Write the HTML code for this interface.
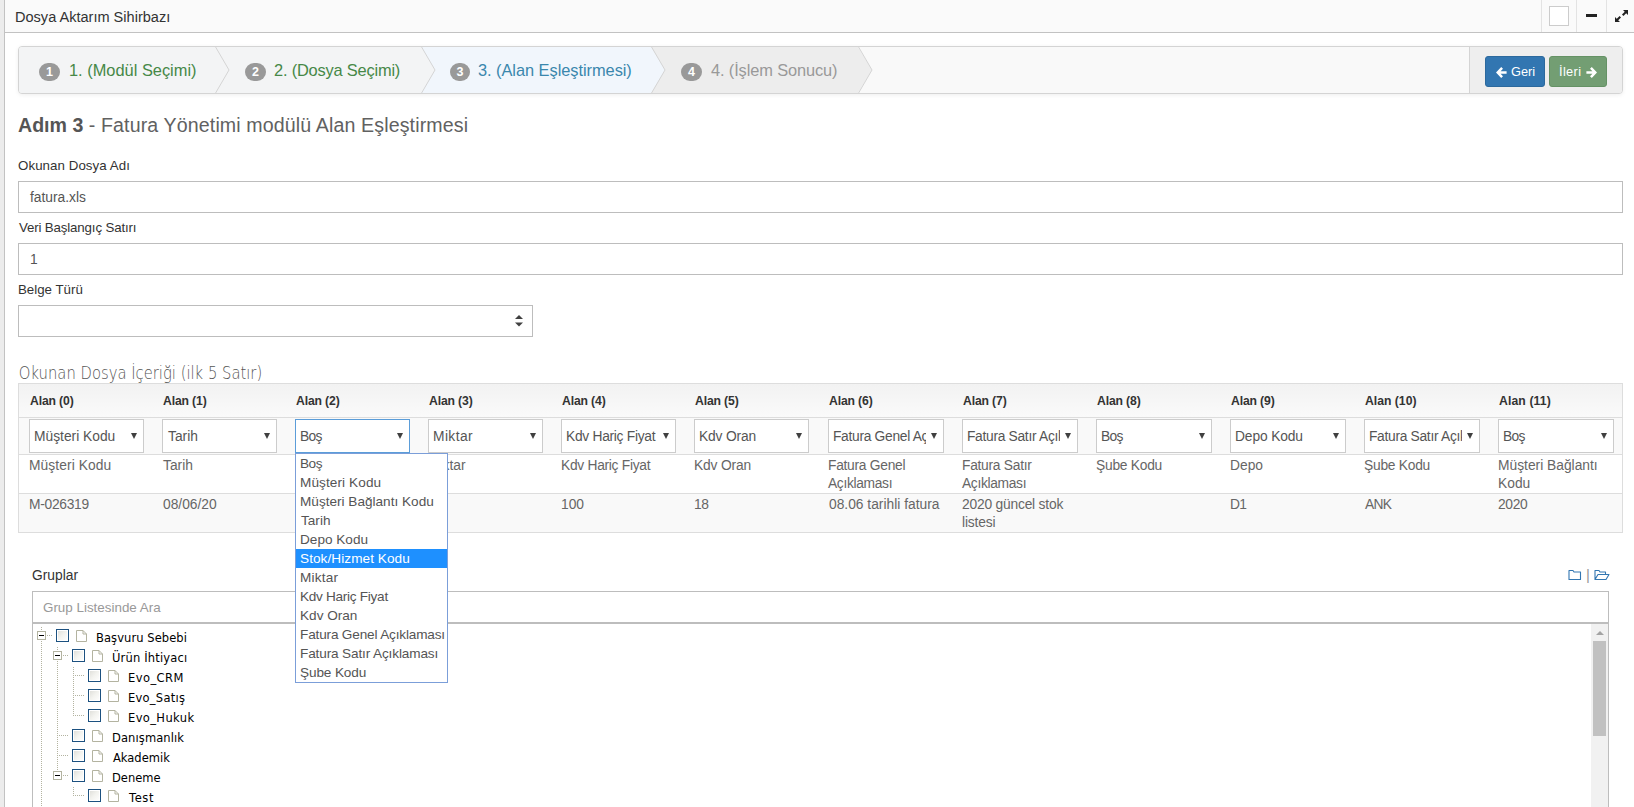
<!DOCTYPE html>
<html lang="tr"><head><meta charset="utf-8"><title>Dosya Aktarım Sihirbazı</title>
<style>
*{box-sizing:border-box}
html,body{margin:0;padding:0}
body{width:1634px;height:807px;overflow:hidden;background:#fff;position:relative;font-family:"Liberation Sans",sans-serif;font-size:13.8px;color:#333;line-height:18px}
i{display:block;position:absolute;font-style:normal}
.abs{position:absolute;white-space:nowrap}
.lstrip{position:absolute;left:0;top:0;width:5px;height:807px;background:#ececec;border-right:1px solid #c2c2c2}
.hdr{position:absolute;left:5px;top:0;width:1629px;height:33px;background:#fafafa;border-bottom:1px solid #c2c2c2}
.hdr h2{position:absolute;left:10px;top:1px;margin:0;font-weight:normal;font-size:14.55px;line-height:33px;color:#333;white-space:nowrap}
.hdr .sep{position:absolute;top:0;width:1px;height:32px;background:#e3e3e3}
.hdr .cbox{position:absolute;left:1544px;top:6px;width:20px;height:20px;background:#fff;border:1px solid #ccc}
.hdr .minus{position:absolute;left:1581px;top:14px;width:11px;height:3px;background:#222}
.hdr svg{position:absolute;left:1610px;top:10px}
.wiz{position:absolute;left:18px;top:46px;width:1605px;height:48px;border:1px solid #d4d4d4;border-radius:4px;background:#f9f9f9;box-shadow:0 1px 4px rgba(0,0,0,.065);overflow:hidden}
.wiz .li{position:absolute;top:0;height:46px;line-height:46px;font-size:16.4px;white-space:nowrap}
.wiz .li .bd.b3{width:20px}
.wiz .li .bd{position:absolute;top:16px;width:21px;height:18px;border-radius:9px;background:#999;color:#fff;font-weight:bold;font-size:12.5px;line-height:18px;text-align:center}
.wiz .li .tx{position:absolute;top:0}
.wiz .li.done{background:#f3f4f5;color:#468847}
.wiz .li.act{background:#f1f6fc;color:#3a87ad}
.wiz .li.todo{background:#ededed;color:#999}
.wiz svg.chev{position:absolute;top:0}
.wiz .acts{position:absolute;left:1450px;top:0;width:153px;height:46px;background:#eee;border-left:1px solid #d4d4d4}
.btn{position:absolute;top:9px;height:31px;border-radius:3px;color:#fff;font-size:12.8px;line-height:29px;border:1px solid;white-space:nowrap}
.btn.geri{left:15px;width:60px;background:#3276b1;border-color:#2c699d}
.btn.ileri{left:79px;width:58px;background:#739e73;border-color:#659265}
.btn span{position:absolute;top:0}
.btn svg{position:absolute;top:10px}
h3.pt{position:absolute;left:18px;top:112px;margin:0;font-size:19.6px;line-height:26px;font-weight:normal;color:#616161;white-space:nowrap}
h3.pt b{color:#555}
.lbl{position:absolute;left:18px;color:#333;white-space:nowrap;line-height:18px;font-size:13.3px}
.inp{position:absolute;left:18px;width:1605px;height:32px;border:1px solid #bdbdbd;background:#fff;color:#555;padding:0 10px;line-height:32px;white-space:nowrap}
h4.sec{position:absolute;left:18px;top:362px;margin:0;font-family:"DejaVu Sans","Liberation Sans",sans-serif;font-size:17px;line-height:22px;font-weight:200;color:#555;white-space:nowrap;transform:scaleX(.87);transform-origin:0 50%}
.tbl{position:absolute;left:18px;top:383px;width:1605px;height:150px;border:1px solid #ddd;color:#666}
.tbl>div{position:absolute}
.thead{left:0;top:0;width:1603px;height:33px;background:linear-gradient(#f2f2f2,#fafafa)}
.r2{left:0;top:33px;width:1603px;height:37px;background:#f9f9f9;border-top:1px solid #ddd}
.r3{left:0;top:70px;width:1603px;height:39px;background:#fff;border-top:1px solid #ddd}
.r4{left:0;top:109px;width:1603px;height:39px;background:#f9f9f9;border-top:1px solid #ddd}
.th{top:8px;font-weight:bold;font-size:12.2px;line-height:18px;color:#333;white-space:nowrap}
.sel{top:35px;width:115px;height:34px;border:1px solid #ccc;background:#fff;color:#555}
.sel.foc{border-color:#5b9dd9}
.sel .st{position:absolute;left:4px;top:0;width:93px;overflow:hidden;white-space:nowrap;line-height:33px}
.sel .ar{right:6px;top:13px;width:0;height:0;border-left:3.5px solid transparent;border-right:3.5px solid transparent;border-top:6px solid #404040}
.td{line-height:18px;white-space:nowrap}
.td.c1{top:73px}
.td.c2{top:112px}
.dd{position:absolute;left:295px;top:453px;width:153px;height:230px;border:1px solid #7b9ed9;background:#fff;color:#555;font-size:13.6px;line-height:19px;white-space:nowrap;overflow:hidden}
.dd div{height:19px;padding-left:4px}
.dd .hl{background:#1e90ff;color:#fff}
.glbl{position:absolute;left:32px;top:567px;line-height:18px;color:#333}
.gic{position:absolute;top:569px}
.gbar{position:absolute;left:1586px;top:566px;color:#999;font-size:15px;line-height:18px}
.ginp{position:absolute;left:32px;top:591px;width:1577px;height:33px;border:1px solid #bdbdbd;border-bottom:2px solid #bdbdbd;background:#fff;color:#999;padding:0 10px;line-height:32px;font-size:13.4px}
.gbox{position:absolute;left:32px;top:624px;width:1577px;height:200px;border-left:1px solid #bdbdbd;border-right:1px solid #bdbdbd}
.tree{position:absolute;left:32px;top:626px;width:600px;height:181px;font-family:"DejaVu Sans","Liberation Sans",sans-serif;font-size:11.5px;color:#000}
.tree .tr{position:absolute;height:20px;width:300px}
.tree .ex{left:5px;top:5px;width:9px;height:9px;border:1px solid #b3b3a0;background:#fff}
.tree .ex:before{content:"";position:absolute;left:1px;top:3px;width:5px;height:1px;background:#000}
.tree .ex:after{content:"";position:absolute;left:9px;top:3px;width:6px;height:1px;background:repeating-linear-gradient(90deg,#b3b3a0 0 1px,transparent 1px 2px)}
.tree .hd{left:9px;top:9px;width:12px;height:1px;background:repeating-linear-gradient(90deg,#b3b3a0 0 1px,transparent 1px 2px)}
.tree .cb{left:24px;top:3px;width:13px;height:13px;border:1px solid #1c5180;background:linear-gradient(135deg,#dcdcd7 0%,#f3f3ef 50%,#fff 100%);box-shadow:inset 0 0 0 1px #fff}
.tree .fi{position:absolute;left:44px;top:4px}
.tree .tt{position:absolute;left:64px;top:2px;line-height:20px;white-space:nowrap}
.tree .vd{width:1px;background:repeating-linear-gradient(180deg,#b3b3a0 0 1px,transparent 1px 2px)}
.sb{position:absolute;left:1591px;top:624px;width:17px;height:183px;background:#f1f1f1}
.sb .up{left:5px;top:7px;width:0;height:0;border-left:4px solid transparent;border-right:4px solid transparent;border-bottom:4px solid #a3a3a3}
.sb .thumb{left:2px;top:17px;width:13px;height:95px;background:#c1c1c1}

.t{position:relative;display:inline-block;white-space:nowrap}

</style></head><body>
<div class="lstrip"></div>
<div class="hdr"><h2><span id="ttl" class="t">Dosya Aktarım Sihirbazı</span></h2>
<span class="sep" style="left:1536px"></span><span class="sep" style="left:1571px"></span><span class="sep" style="left:1601px"></span>
<span class="cbox"></span><span class="minus"></span>
<svg width="13" height="12" viewBox="0 0 13 12"><path d="M8 0H13V5Z M0 7V12H5Z" fill="#222"/><path d="M11 2L7.7 5.3 M2 10L5.3 6.7" stroke="#222" stroke-width="2" fill="none"/></svg>
</div>
<div class="wiz">
<div class="li done" style="left:0;width:196px"><span class="bd" style="left:20px">1</span><span class="tx" style="left:50px"><span id="s1" class="t">1. (Modül Seçimi)</span></span></div>
<div class="li done" style="left:196px;width:206px"><span class="bd" style="left:30px">2</span><span class="tx" style="left:60px"><span id="s2" class="t" style="left:-1.00px;letter-spacing:-0.188px">2. (Dosya Seçimi)</span></span></div>
<div class="li act" style="left:402px;width:230px"><span class="bd b3" style="left:29px">3</span><span class="tx" style="left:58px"><span id="s3" class="t" style="left:-1.00px;letter-spacing:-0.048px">3. (Alan Eşleştirmesi)</span></span></div>
<div class="li todo" style="left:632px;width:207px"><span class="bd" style="left:30px">4</span><span class="tx" style="left:60px"><span id="s4" class="t" style="letter-spacing:-0.125px">4. (İşlem Sonucu)</span></span></div>
<svg class="chev" style="left:196px" width="15" height="46"><polygon points="0,0 14,23 0,46" fill="#f3f4f5"/><polyline points="0,-1 14,23 0,47" fill="none" stroke="#d4d4d4"/></svg>
<svg class="chev" style="left:402px" width="15" height="46"><polygon points="0,0 14,23 0,46" fill="#f3f4f5"/><polyline points="0,-1 14,23 0,47" fill="none" stroke="#d4d4d4"/></svg>
<svg class="chev" style="left:632px" width="15" height="46"><polygon points="0,0 14,23 0,46" fill="#f1f6fc"/><polyline points="0,-1 14,23 0,47" fill="none" stroke="#d4d4d4"/></svg>
<svg class="chev" style="left:839px" width="15" height="46"><polygon points="0,0 14,23 0,46" fill="#ededed"/><polyline points="0,-1 14,23 0,47" fill="none" stroke="#d4d4d4"/></svg>
<div class="acts">
<div class="btn geri"><svg style="left:10px" width="11" height="11" viewBox="0 0 11 11"><path d="M5.2 0L7 1.8L4.6 4.2H10.6V6.8H4.6L7 9.2L5.2 11L0 5.5Z" fill="#fff"/></svg><span style="left:26px"><span id="geri" class="t" style="left:-1.00px">Geri</span></span></div>
<div class="btn ileri"><span style="left:10px"><span id="ileri" class="t" style="left:-1.00px;letter-spacing:0.350px">İleri</span></span><svg style="left:36px" width="11" height="11" viewBox="0 0 11 11"><path d="M5.8 0L4 1.8L6.4 4.2H0.4V6.8H6.4L4 9.2L5.8 11L11 5.5Z" fill="#fff"/></svg></div>
</div>
</div>
<h3 class="pt"><b><span id="ptb" class="t">Adım 3</span></b> <span id="ptr" class="t" style="letter-spacing:0.122px">- Fatura Yönetimi modülü Alan Eşleştirmesi</span></h3>
<div class="lbl" style="top:157px"><span id="l1" class="t" style="letter-spacing:0.067px">Okunan Dosya Adı</span></div>
<div class="inp" style="top:181px"><span id="f1" class="t" style="left:1.00px">fatura.xls</span></div>
<div class="lbl" style="top:219px"><span id="l2" class="t" style="left:1.00px;letter-spacing:-0.150px">Veri Başlangıç Satırı</span></div>
<div class="inp" style="top:243px"><span id="f2" class="t" style="left:1.00px">1</span></div>
<div class="lbl" style="top:281px"><span id="l3" class="t">Belge Türü</span></div>
<div class="inp" style="top:305px;width:515px"><svg style="position:absolute;left:496px;top:9px" width="8" height="12" viewBox="0 0 8 12"><path d="M0 4L4 0L8 4Z M0 7.5H8L4 11.5Z" fill="#404040"/></svg></div>
<h4 class="sec"><span id="h4" class="t" style="left:1.00px">Okunan Dosya İçeriği (ilk 5 Satır)</span></h4>
<div class="tbl">
<div class="thead"></div><div class="r2"></div><div class="r3"></div><div class="r4"></div>
<div class="th" style="left:10px"><span id="th0" class="t" style="left:1.00px;letter-spacing:-0.143px">Alan (0)</span></div><div class="sel" style="left:10px;width:115px"><span class="st"><span id="st0" class="t">Müşteri Kodu</span></span><i class="ar"></i></div><div class="td c1" style="left:10px"><span id="c1_0_0" class="t" style="letter-spacing:0.091px">Müşteri Kodu</span></div><div class="td c2" style="left:10px"><span id="c2_0_0" class="t" style="letter-spacing:-0.286px">M-026319</span></div>
<div class="th" style="left:143px"><span id="th1" class="t" style="left:1.00px;letter-spacing:-0.143px">Alan (1)</span></div><div class="sel" style="left:143px;width:115px"><span class="st"><span id="st1" class="t" style="left:1.00px">Tarih</span></span><i class="ar"></i></div><div class="td c1" style="left:143px"><span id="c1_1_0" class="t" style="left:1.00px">Tarih</span></div><div class="td c2" style="left:143px"><span id="c2_1_0" class="t" style="left:1.00px">08/06/20</span></div>
<div class="th" style="left:276px"><span id="th2" class="t" style="left:1.00px;letter-spacing:-0.143px">Alan (2)</span></div><div class="sel foc" style="left:276px;width:115px"><span class="st"><span id="st2" class="t" style="letter-spacing:-0.700px">Boş</span></span><i class="ar"></i></div>
<div class="th" style="left:409px"><span id="th3" class="t" style="left:1.00px;letter-spacing:-0.143px">Alan (3)</span></div><div class="sel" style="left:409px;width:115px"><span class="st"><span id="st3" class="t" style="letter-spacing:0.400px">Miktar</span></span><i class="ar"></i></div><div class="td c1" style="left:409px"><span id="c1_3_0" class="t">Miktar</span></div>
<div class="th" style="left:542px"><span id="th4" class="t" style="left:1.00px;letter-spacing:-0.143px">Alan (4)</span></div><div class="sel" style="left:542px;width:115px"><span class="st"><span id="st4" class="t" style="letter-spacing:-0.285px">Kdv Hariç Fiyat</span></span><i class="ar"></i></div><div class="td c1" style="left:542px"><span id="c1_4_0" class="t" style="letter-spacing:-0.286px">Kdv Hariç Fiyat</span></div><div class="td c2" style="left:542px"><span id="c2_4_0" class="t">100</span></div>
<div class="th" style="left:675px"><span id="th5" class="t" style="left:1.00px;letter-spacing:-0.143px">Alan (5)</span></div><div class="sel" style="left:675px;width:115px"><span class="st"><span id="st5" class="t" style="letter-spacing:-0.143px">Kdv Oran</span></span><i class="ar"></i></div><div class="td c1" style="left:675px"><span id="c1_5_0" class="t" style="letter-spacing:-0.143px">Kdv Oran</span></div><div class="td c2" style="left:675px"><span id="c2_5_0" class="t" style="letter-spacing:-0.400px">18</span></div>
<div class="th" style="left:809px"><span id="th6" class="t" style="left:1.00px;letter-spacing:-0.143px">Alan (6)</span></div><div class="sel" style="left:809px;width:116px"><span class="st"><span id="st6" class="t" style="letter-spacing:-0.303px">Fatura Genel Açıklaması</span></span><i class="ar"></i></div><div class="td c1" style="left:809px"><span id="c1_6_0" class="t" style="letter-spacing:-0.273px">Fatura Genel</span><br><span id="c1_6_1" class="t" style="letter-spacing:-0.333px">Açıklaması</span></div><div class="td c2" style="left:809px"><span id="c2_6_0" class="t" style="left:1.00px">08.06 tarihli fatura</span></div>
<div class="th" style="left:943px"><span id="th7" class="t" style="left:1.00px;letter-spacing:-0.143px">Alan (7)</span></div><div class="sel" style="left:943px;width:116px"><span class="st"><span id="st7" class="t" style="letter-spacing:-0.303px">Fatura Satır Açıklaması</span></span><i class="ar"></i></div><div class="td c1" style="left:943px"><span id="c1_7_0" class="t" style="letter-spacing:-0.273px">Fatura Satır</span><br><span id="c1_7_1" class="t" style="letter-spacing:-0.333px">Açıklaması</span></div><div class="td c2" style="left:943px"><span id="c2_7_0" class="t" style="letter-spacing:-0.200px">2020 güncel stok</span><br><span id="c2_7_1" class="t" style="letter-spacing:-0.166px">listesi</span></div>
<div class="th" style="left:1077px"><span id="th8" class="t" style="left:1.00px;letter-spacing:-0.143px">Alan (8)</span></div><div class="sel" style="left:1077px;width:116px"><span class="st"><span id="st8" class="t" style="letter-spacing:-0.700px">Boş</span></span><i class="ar"></i></div><div class="td c1" style="left:1077px"><span id="c1_8_0" class="t" style="letter-spacing:-0.250px">Şube Kodu</span></div>
<div class="th" style="left:1211px"><span id="th9" class="t" style="left:1.00px;letter-spacing:-0.143px">Alan (9)</span></div><div class="sel" style="left:1211px;width:116px"><span class="st"><span id="st9" class="t" style="letter-spacing:-0.125px">Depo Kodu</span></span><i class="ar"></i></div><div class="td c1" style="left:1211px"><span id="c1_9_0" class="t">Depo</span></div><div class="td c2" style="left:1211px"><span id="c2_9_0" class="t" style="letter-spacing:-0.700px">D1</span></div>
<div class="th" style="left:1345px"><span id="th10" class="t" style="left:1.00px">Alan (10)</span></div><div class="sel" style="left:1345px;width:116px"><span class="st"><span id="st10" class="t" style="letter-spacing:-0.303px">Fatura Satır Açıklaması</span></span><i class="ar"></i></div><div class="td c1" style="left:1345px"><span id="c1_10_0" class="t" style="letter-spacing:-0.250px">Şube Kodu</span></div><div class="td c2" style="left:1345px"><span id="c2_10_0" class="t" style="left:1.00px;letter-spacing:-0.700px">ANK</span></div>
<div class="th" style="left:1479px"><span id="th11" class="t" style="left:1.00px;letter-spacing:0.125px">Alan (11)</span></div><div class="sel" style="left:1479px;width:116px"><span class="st"><span id="st11" class="t" style="letter-spacing:-0.700px">Boş</span></span><i class="ar"></i></div><div class="td c1" style="left:1479px"><span id="c1_11_0" class="t">Müşteri Bağlantı</span><br><span id="c1_11_1" class="t">Kodu</span></div><div class="td c2" style="left:1479px"><span id="c2_11_0" class="t" style="letter-spacing:-0.334px">2020</span></div>
</div>
<div class="glbl"><span id="gl" class="t">Gruplar</span></div>
<svg class="gic" style="left:1568px" width="14" height="12" viewBox="0 0 14 12"><path d="M1 1.5H5L6 3H12.5V10.5H1Z" fill="none" stroke="#3276b1" stroke-width="1.1" stroke-linejoin="round"/></svg>
<div class="gbar">|</div>
<svg class="gic" style="left:1594px" width="16" height="12" viewBox="0 0 16 12"><path d="M1 10.5V1.5H5L6 3H11.5V5.5 M1 10.5L4 5.5H15L12 10.5Z" fill="none" stroke="#3276b1" stroke-width="1.1" stroke-linejoin="round"/></svg>
<div class="ginp"><span id="ph" class="t">Grup Listesinde Ara</span></div>
<div class="gbox"></div>
<div class="tree">
<i class="vd" style="left:9px;top:1px;height:5px"></i><i class="vd" style="left:9px;top:15px;height:170px"></i>
<i class="vd" style="left:25px;top:21px;height:5px"></i><i class="vd" style="left:25px;top:35px;height:110px"></i>
<i class="vd" style="left:41px;top:41px;height:49px"></i><i class="vd" style="left:41px;top:161px;height:9px"></i>
<div class="tr" style="top:0px;left:0px"><i class="ex"></i><i class="cb"></i><svg class="fi" width="11" height="12" viewBox="0 0 11 12"><path d="M0.5 0.5H7L10.5 4V11.5H0.5Z M7 0.5V4H10.5" fill="#fff" stroke="#b3b3a0" stroke-width="1"/></svg><span class="tt"><span id="tr0" class="t" style="letter-spacing:0.077px">Başvuru Sebebi</span></span></div>
<div class="tr" style="top:20px;left:16px"><i class="ex"></i><i class="cb"></i><svg class="fi" width="11" height="12" viewBox="0 0 11 12"><path d="M0.5 0.5H7L10.5 4V11.5H0.5Z M7 0.5V4H10.5" fill="#fff" stroke="#b3b3a0" stroke-width="1"/></svg><span class="tt"><span id="tr1" class="t" style="letter-spacing:0.166px">Ürün İhtiyacı</span></span></div>
<div class="tr" style="top:40px;left:32px"><i class="hd"></i><i class="cb"></i><svg class="fi" width="11" height="12" viewBox="0 0 11 12"><path d="M0.5 0.5H7L10.5 4V11.5H0.5Z M7 0.5V4H10.5" fill="#fff" stroke="#b3b3a0" stroke-width="1"/></svg><span class="tt"><span id="tr2" class="t" style="letter-spacing:0.433px">Evo_CRM</span></span></div>
<div class="tr" style="top:60px;left:32px"><i class="hd"></i><i class="cb"></i><svg class="fi" width="11" height="12" viewBox="0 0 11 12"><path d="M0.5 0.5H7L10.5 4V11.5H0.5Z M7 0.5V4H10.5" fill="#fff" stroke="#b3b3a0" stroke-width="1"/></svg><span class="tt"><span id="tr3" class="t" style="letter-spacing:0.250px">Evo_Satış</span></span></div>
<div class="tr" style="top:80px;left:32px"><i class="hd"></i><i class="cb"></i><svg class="fi" width="11" height="12" viewBox="0 0 11 12"><path d="M0.5 0.5H7L10.5 4V11.5H0.5Z M7 0.5V4H10.5" fill="#fff" stroke="#b3b3a0" stroke-width="1"/></svg><span class="tt"><span id="tr4" class="t" style="letter-spacing:0.375px">Evo_Hukuk</span></span></div>
<div class="tr" style="top:100px;left:16px"><i class="hd"></i><i class="cb"></i><svg class="fi" width="11" height="12" viewBox="0 0 11 12"><path d="M0.5 0.5H7L10.5 4V11.5H0.5Z M7 0.5V4H10.5" fill="#fff" stroke="#b3b3a0" stroke-width="1"/></svg><span class="tt"><span id="tr5" class="t" style="letter-spacing:0.100px">Danışmanlık</span></span></div>
<div class="tr" style="top:120px;left:16px"><i class="hd"></i><i class="cb"></i><svg class="fi" width="11" height="12" viewBox="0 0 11 12"><path d="M0.5 0.5H7L10.5 4V11.5H0.5Z M7 0.5V4H10.5" fill="#fff" stroke="#b3b3a0" stroke-width="1"/></svg><span class="tt"><span id="tr6" class="t" style="left:1.00px">Akademik</span></span></div>
<div class="tr" style="top:140px;left:16px"><i class="ex"></i><i class="cb"></i><svg class="fi" width="11" height="12" viewBox="0 0 11 12"><path d="M0.5 0.5H7L10.5 4V11.5H0.5Z M7 0.5V4H10.5" fill="#fff" stroke="#b3b3a0" stroke-width="1"/></svg><span class="tt"><span id="tr7" class="t">Deneme</span></span></div>
<div class="tr" style="top:160px;left:32px"><i class="hd"></i><i class="cb"></i><svg class="fi" width="11" height="12" viewBox="0 0 11 12"><path d="M0.5 0.5H7L10.5 4V11.5H0.5Z M7 0.5V4H10.5" fill="#fff" stroke="#b3b3a0" stroke-width="1"/></svg><span class="tt"><span id="tr8" class="t" style="left:1.00px;letter-spacing:0.600px">Test</span></span></div>
</div>
<div class="sb"><i class="up"></i><i class="thumb"></i></div>
<div class="dd"><div><span id="dd0" class="t" style="letter-spacing:-0.500px">Boş</span></div><div><span id="dd1" class="t" style="letter-spacing:0.091px">Müşteri Kodu</span></div><div><span id="dd2" class="t">Müşteri Bağlantı Kodu</span></div><div><span id="dd3" class="t" style="left:1.00px">Tarih</span></div><div><span id="dd4" class="t">Depo Kodu</span></div><div class="hl"><span id="dd5" class="t" style="letter-spacing:0.067px">Stok/Hizmet Kodu</span></div><div><span id="dd6" class="t" style="letter-spacing:0.200px">Miktar</span></div><div><span id="dd7" class="t" style="letter-spacing:-0.286px">Kdv Hariç Fiyat</span></div><div><span id="dd8" class="t">Kdv Oran</span></div><div><span id="dd9" class="t" style="letter-spacing:-0.170px">Fatura Genel Açıklaması</span></div><div><span id="dd10" class="t" style="letter-spacing:-0.136px">Fatura Satır Açıklaması</span></div><div><span id="dd11" class="t" style="letter-spacing:-0.125px">Şube Kodu</span></div></div>
</body></html>
